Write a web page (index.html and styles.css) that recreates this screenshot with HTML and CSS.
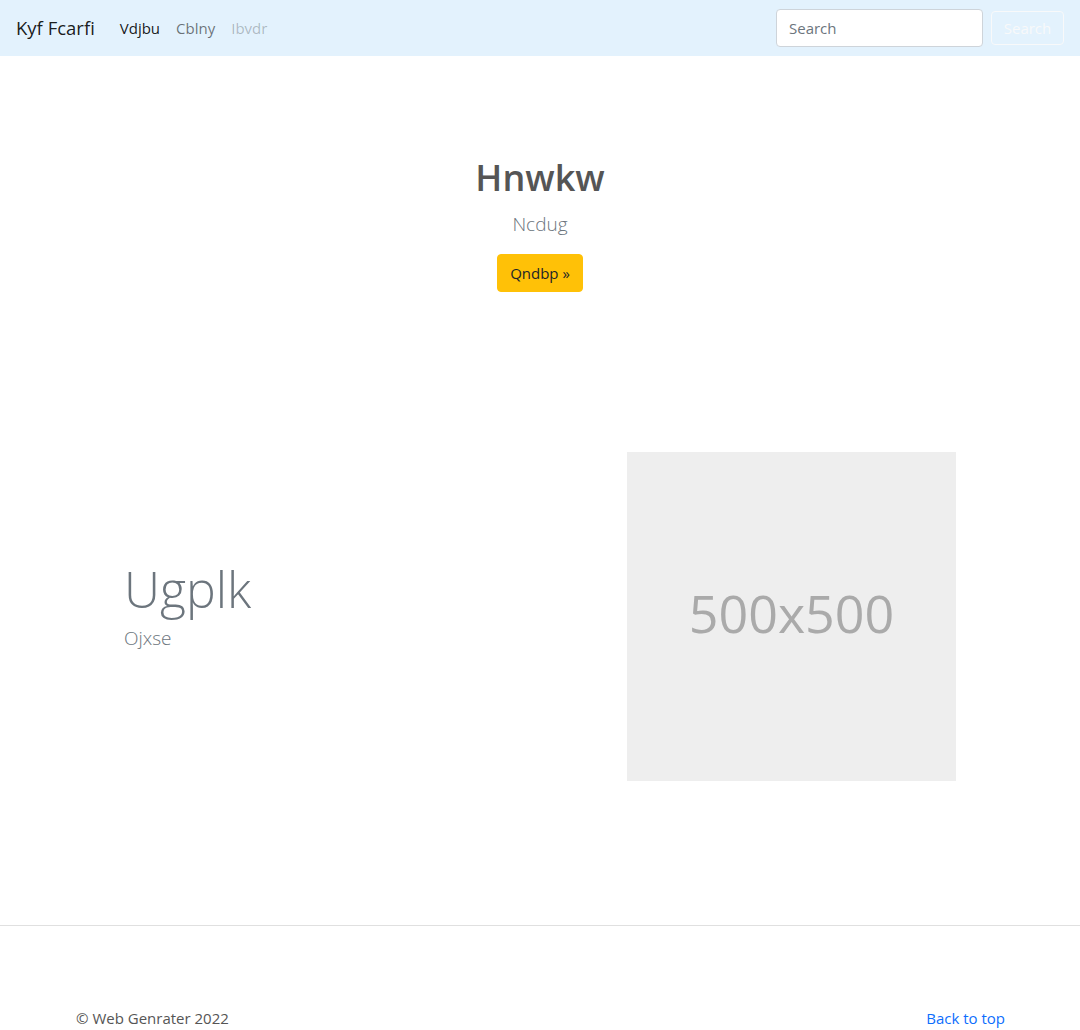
FILE: index.html
```html
<!DOCTYPE html>
<html lang="en">
<head>
<meta charset="utf-8">
<title>Kyf Fcarfi</title>
<link rel="stylesheet" href="styles.css">
</head>
<body>
<header class="navbar">
  <div class="nav-left">
    <a class="brand" href="#">Kyf Fcarfi</a>
    <nav class="nav-links">
      <a class="nav-link active" href="#">Vdjbu</a>
      <a class="nav-link" href="#">Cblny</a>
      <a class="nav-link disabled" href="#">Ibvdr</a>
    </nav>
  </div>
  <form class="search">
    <input class="search-input" type="search" placeholder="Search">
    <button class="search-btn" type="button">Search</button>
  </form>
</header>

<main>
  <section class="hero">
    <h1 class="hero-title">Hnwkw</h1>
    <p class="hero-lead">Ncdug</p>
    <a class="btn-warning" href="#">Qndbp »</a>
  </section>

  <section class="feature">
    <div class="feature-text">
      <h2 class="feature-title">Ugplk</h2>
      <p class="feature-lead">Ojxse</p>
    </div>
    <div class="feature-media">
      <div class="placeholder">500x500</div>
    </div>
  </section>
</main>

<hr class="divider">

<footer class="footer">
  <p class="copy">© Web Genrater 2022</p>
  <a class="top-link" href="#">Back to top</a>
</footer>
</body>
</html>
```

FILE: styles.css
```css
* { box-sizing: border-box; }
html, body { margin: 0; padding: 0; }
body {
  font-family: "Open Sans", "Noto Sans", "Liberation Sans", sans-serif;
  font-size: 15px;
  line-height: 1.5;
  color: #212529;
  background: #fff;
}
a { text-decoration: none; }

.navbar {
  height: 56px;
  background: #e3f2fd;
  display: flex;
  align-items: center;
  justify-content: space-between;
  padding: 0 16px;
}
.nav-left { display: flex; align-items: center; }
.brand {
  font-size: 18.5px;
  color: rgba(0,0,0,.9);
  margin-right: 17px;
  line-height: 30px;
}
.nav-links { display: flex; }
.nav-link {
  padding: 8px 8px;
  font-size: 15px;
  color: rgba(0,0,0,.55);
}
.nav-link.active { color: rgba(0,0,0,.9); }
.nav-link.disabled { color: rgba(0,0,0,.25); }

.search { display: flex; align-items: center; gap: 8px; }
.search-input {
  width: 207px;
  height: 38px;
  border: 1px solid #ced4da;
  border-radius: 4px;
  padding: 6px 12px;
  font: inherit;
  font-size: 15px;
  color: #212529;
  background: #fff;
}
.search-input::placeholder { color: #6c757d; }
.search-btn {
  width: 73px;
  height: 34px;
  border: 1px solid #f8f9fa;
  border-radius: 4px;
  background: transparent;
  color: #f8f9fa;
  font: inherit;
  font-size: 15px;
  padding: 0;
}

.hero {
  text-align: center;
  padding: 98px 0 0;
}
.hero-title {
  margin: 0 0 7px;
  font-size: 36px;
  line-height: 48px;
  font-weight: 600;
  color: #555;
}
.hero-lead {
  margin: 0 0 15px;
  font-size: 19px;
  font-weight: 300;
  line-height: 30px;
  color: #6c757d;
}
.btn-warning {
  display: inline-block;
  height: 38px;
  line-height: 36px;
  padding: 0 12px;
  border: 1px solid #ffc107;
  border-radius: 4px;
  background: #ffc107;
  color: #212529;
  font-size: 15px;
}

.feature {
  width: 960px;
  margin: 160px auto 0;
  display: flex;
  align-items: center;
}
.feature-text {
  width: 567px;
  padding-left: 64px;
  padding-bottom: 24px;
}
.feature-title {
  margin: 0;
  font-size: 50px;
  font-weight: 300;
  line-height: 67px;
  color: #6c757d;
}
.feature-lead {
  margin: 0;
  font-size: 19px;
  font-weight: 300;
  line-height: 30px;
  color: #6c757d;
}
.feature-media { width: 329px; }
.placeholder {
  width: 329px;
  height: 329px;
  padding-bottom: 8px;
  background: #eee;
  color: #aaa;
  font-size: 52px;
  display: flex;
  align-items: center;
  justify-content: center;
}

.divider {
  margin: 144px 0 0;
  border: 0;
  border-top: 1px solid #e0e0e0;
}

.footer {
  width: 960px;
  margin: 0 auto;
  padding: 80px 12px 0;
  display: flex;
  justify-content: space-between;
  align-items: center;
  font-size: 15px;
}
.copy { margin: 0; padding-left: 4px; line-height: 24px; color: #555; }
.top-link { color: #0d6efd; line-height: 24px; padding-right: 3px; }
```
